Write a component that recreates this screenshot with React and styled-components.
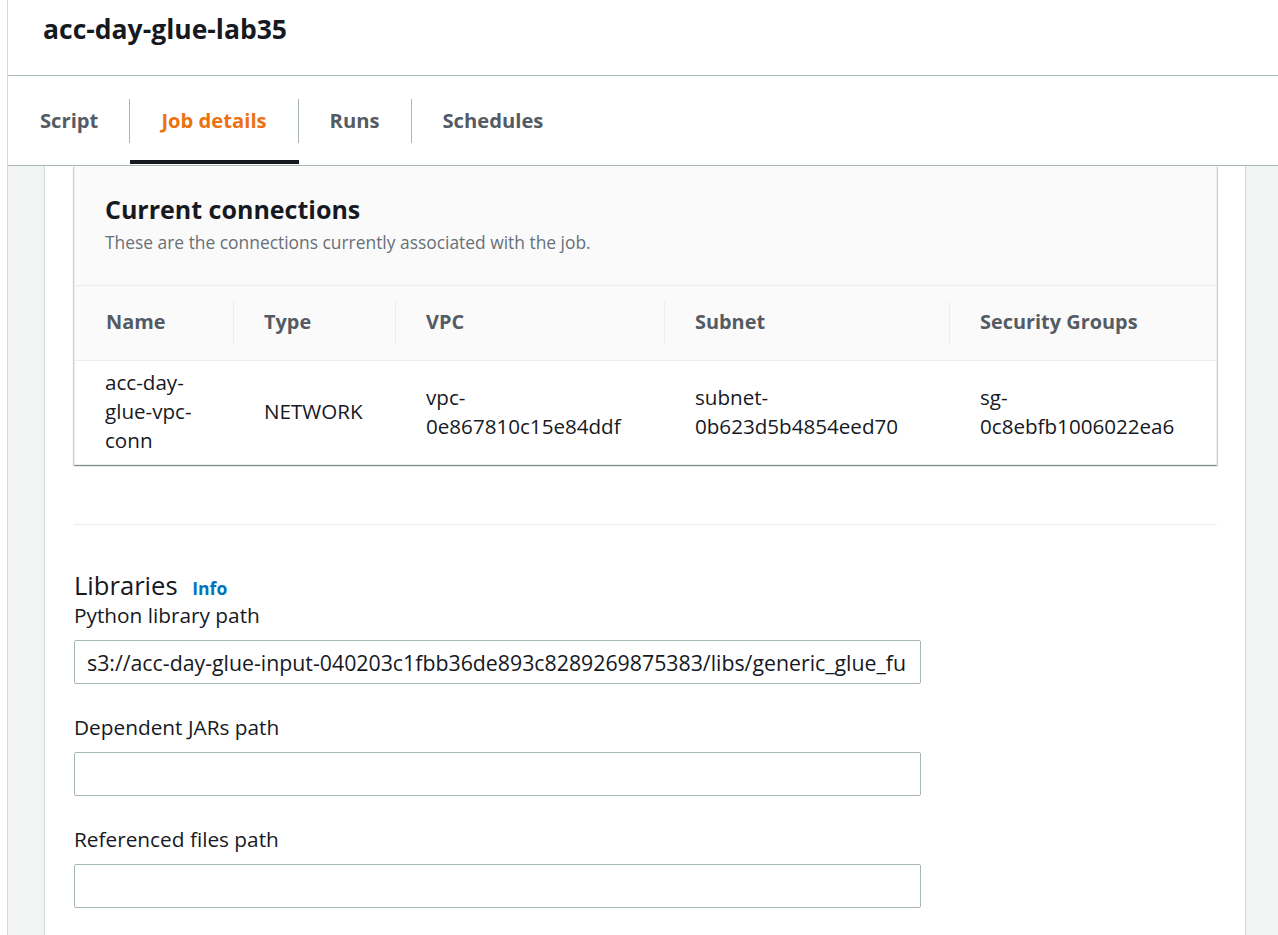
import React from "react";
import styled, { createGlobalStyle } from "styled-components";

const GlobalStyle = createGlobalStyle`
  html, body {
    margin: 0;
    padding: 0;
    background: #ffffff;
    font-family: "Open Sans", "Liberation Sans", Arial, sans-serif;
    color: #16191f;
  }
  #root {
    min-height: 100vh;
    display: flex;
    flex-direction: column;
  }
`;

const tabs = ["Script", "Job details", "Runs", "Schedules"];

const columns = [
  { key: "name", label: "Name" },
  { key: "type", label: "Type" },
  { key: "vpc", label: "VPC" },
  { key: "subnet", label: "Subnet" },
  { key: "sg", label: "Security Groups" },
];

const connection = {
  name: "acc-day-glue-vpc-conn",
  type: "NETWORK",
  vpc: "vpc-0e867810c15e84ddf",
  subnet: "subnet-0b623d5b4854eed70",
  sg: "sg-0c8ebfb1006022ea6",
};

const fields = [
  {
    label: "Python library path",
    value:
      "s3://acc-day-glue-input-040203c1fbb36de893c8289269875383/libs/generic_glue_functions.zip",
  },
  { label: "Dependent JARs path", value: "" },
  { label: "Referenced files path", value: "" },
];

function App() {
  return (
    <>
      <GlobalStyle />
      <Page>
        <Header>
          <Title>acc-day-glue-lab35</Title>
        </Header>

        <TabBar>
          {tabs.map((t, i) => (
            <Tab key={t} $active={t === "Job details"} $first={i === 0}>
              {t}
            </Tab>
          ))}
        </TabBar>

        <Body>
          <Panel>
            <Card>
              <CardHeader>
                <CardTitle>Current connections</CardTitle>
                <CardDescription>
                  These are the connections currently associated with the job.
                </CardDescription>
              </CardHeader>
              <TableHead>
                {columns.map((c, i) => (
                  <HeadCell key={c.key} $divider={i > 0}>
                    {c.label}
                  </HeadCell>
                ))}
              </TableHead>
              <TableRow>
                {columns.map((c) => (
                  <Cell key={c.key}>{connection[c.key]}</Cell>
                ))}
              </TableRow>
            </Card>

            <Divider />

            <SectionTitle>
              Libraries <InfoLink href="#">Info</InfoLink>
            </SectionTitle>

            {fields.map((f) => (
              <Field key={f.label}>
                <Label>{f.label}</Label>
                <TextInput type="text" defaultValue={f.value} readOnly />
              </Field>
            ))}
          </Panel>
        </Body>
      </Page>
    </>
  );
}

const Page = styled.div`
  flex: 1;
  display: flex;
  flex-direction: column;
  margin-left: 7px;
  border-left: 1px solid #d5dbdb;
`;

const Header = styled.div`
  height: 75px;
  display: flex;
  align-items: center;
  padding-left: 35px;
  border-bottom: 1px solid #aab7b8;
`;

const Title = styled.h1`
  margin: 0 0 18px;
  font-size: 26.5px;
  font-weight: 700;
  color: #16191f;
`;

const TabBar = styled.div`
  height: 90px;
  display: flex;
  align-items: center;
  border-bottom: 1px solid #aab7b8;
  box-sizing: border-box;
`;

const Tab = styled.div`
  position: relative;
  height: 44px;
  display: flex;
  align-items: center;
  box-sizing: border-box;
  padding: 0 31px 2px ${(p) => (p.$first ? "32px" : "31px")};
  border-left: ${(p) => (p.$first ? "none" : "1px solid #aab7b8")};
  font-size: 20.2px;
  font-weight: 700;
  color: ${(p) => (p.$active ? "#ec7211" : "#545b64")};

  &::after {
    content: "";
    display: ${(p) => (p.$active ? "block" : "none")};
    position: absolute;
    left: 0;
    right: -1px;
    bottom: -21px;
    height: 4px;
    background: #16191f;
  }
`;

const Body = styled.div`
  flex: 1;
  display: flex;
  background: #f2f3f3;
  padding: 0 32px 0 36px;
`;

const Panel = styled.div`
  flex: 1;
  background: #ffffff;
  border-left: 1px solid #d5dbdb;
  border-right: 1px solid #d5dbdb;
  padding: 0 28px 30px 29px;
`;

const Card = styled.div`
  background: #ffffff;
  border: 1px solid #eaeded;
  border-top: none;
  box-shadow: 0 1px 1px 0 rgba(0, 28, 36, 0.3), 1px 1px 1px 0 rgba(0, 28, 36, 0.15),
    -1px 1px 1px 0 rgba(0, 28, 36, 0.15);
`;

const CardHeader = styled.div`
  background: #fafafa;
  padding: 27px 30px 31px;
  border-bottom: 1px solid #eaeded;
`;

const CardTitle = styled.h2`
  margin: 0;
  font-size: 25px;
  line-height: 32px;
  font-weight: 700;
  color: #16191f;
`;

const CardDescription = styled.div`
  margin-top: 5px;
  font-size: 17.4px;
  line-height: 24px;
  color: #687078;
`;

const grid = `
  display: grid;
  grid-template-columns: 158px 162px 269px 285px 1fr;
`;

const TableHead = styled.div`
  ${grid}
  background: #fafafa;
  height: 74px;
  align-items: center;
  border-bottom: 1px solid #eaeded;
`;

const HeadCell = styled.div`
  height: 43px;
  box-sizing: border-box;
  display: flex;
  align-items: center;
  padding-bottom: 3px;
  padding-left: ${(p) => (p.$divider ? "30px" : "31px")};
  border-left: ${(p) => (p.$divider ? "1px solid #eaeded" : "none")};
  font-size: 19.9px;
  font-weight: 700;
  color: #545b64;
`;

const TableRow = styled.div`
  ${grid}
  align-items: center;
  padding: 7px 0 9px;
`;

const Cell = styled.div`
  padding: 0 24px 0 31px;
  font-size: 20.6px;
  line-height: 29px;
  color: #16191f;
  &:first-child {
    padding-left: 30px;
  }
`;

const Divider = styled.hr`
  margin: 59px 0 0;
  border: none;
  border-top: 1px solid #eaeded;
`;

const SectionTitle = styled.h3`
  margin: 46px 0 0;
  font-size: 25.6px;
  line-height: 30px;
  font-weight: 400;
  color: #16191f;
`;

const InfoLink = styled.a`
  margin-left: 8px;
  font-size: 17.5px;
  font-weight: 700;
  color: #0073bb;
  text-decoration: none;
`;

const Field = styled.div`
  display: flex;
  flex-direction: column;
  & + & {
    margin-top: 31px;
  }
`;

const Label = styled.label`
  font-size: 20.8px;
  line-height: 24px;
  color: #16191f;
`;

const TextInput = styled.input`
  margin-top: 13px;
  width: 847px;
  height: 44px;
  box-sizing: border-box;
  padding: 0 14px 0 12px;
  border: 1px solid #aab7b8;
  border-radius: 2px;
  font-family: inherit;
  font-size: 21.3px;
  color: #16191f;
  background: #ffffff;
  outline: none;
`;

export default App;
